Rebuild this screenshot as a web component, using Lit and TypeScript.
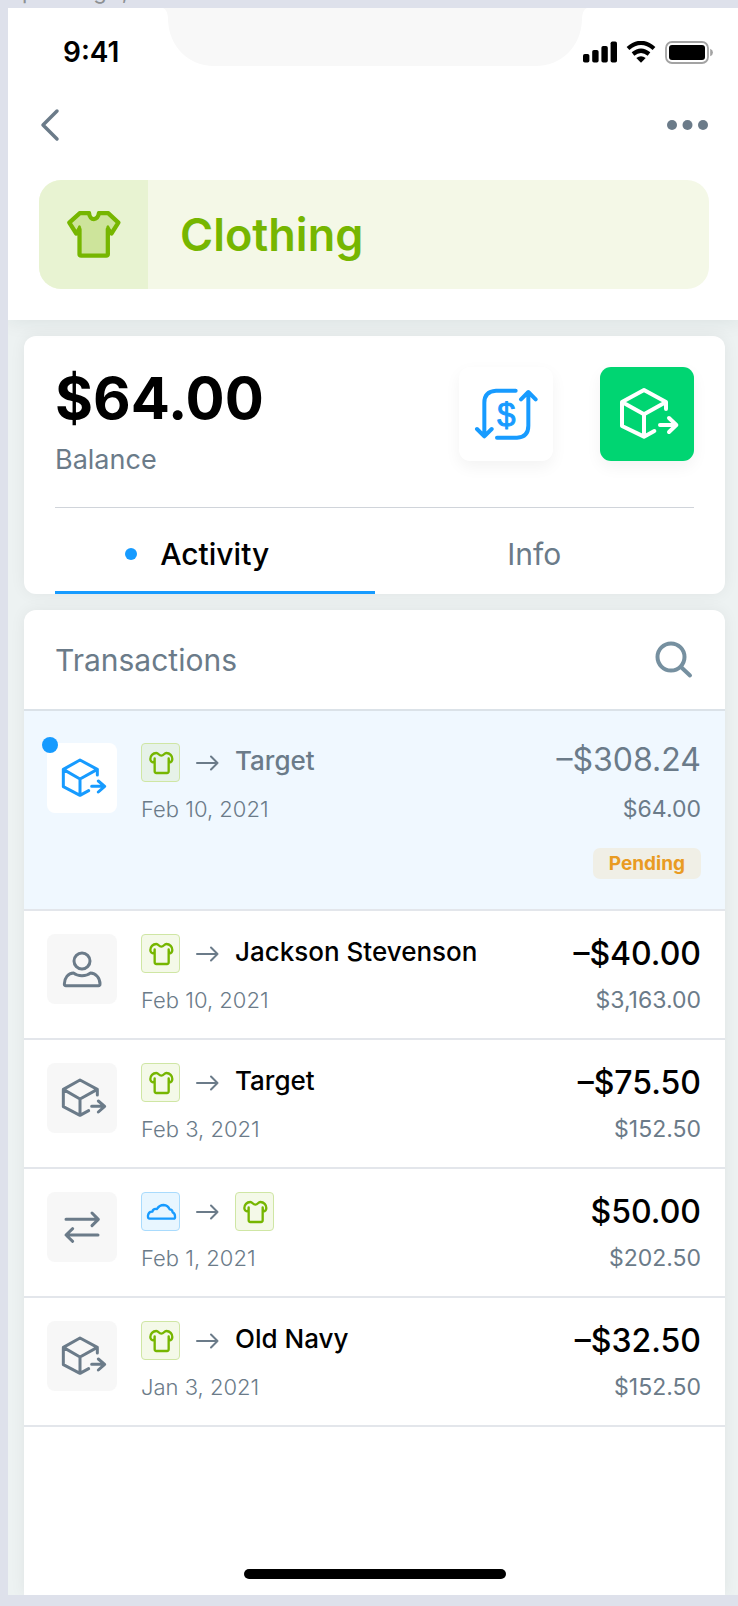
import { LitElement, html, svg, css, nothing, type TemplateResult } from "lit";
import { customElement, property, state } from "lit/decorators.js";
import { classMap } from "lit/directives/class-map.js";

type Kind = "spend" | "person" | "transfer";
type Pocket = "clothing" | "travel";

interface Transaction {
  kind: Kind;
  from: Pocket;
  to: string | { pocket: Pocket };
  date: string;
  amount: string;
  balance: string;
  pending?: boolean;
}

const TRANSACTIONS: Transaction[] = [
  { kind: "spend", from: "clothing", to: "Target", date: "Feb 10, 2021", amount: "–$308.24", balance: "$64.00", pending: true },
  { kind: "person", from: "clothing", to: "Jackson Stevenson", date: "Feb 10, 2021", amount: "–$40.00", balance: "$3,163.00" },
  { kind: "spend", from: "clothing", to: "Target", date: "Feb 3, 2021", amount: "–$75.50", balance: "$152.50" },
  { kind: "transfer", from: "travel", to: { pocket: "clothing" }, date: "Feb 1, 2021", amount: "$50.00", balance: "$202.50" },
  { kind: "spend", from: "clothing", to: "Old Navy", date: "Jan 3, 2021", amount: "–$32.50", balance: "$152.50" },
];

const KIND_PATHS: Record<Kind, TemplateResult> = {
  spend: svg`<path d="M151 96V79L99 51L49 79V131L99 157L125 143M49 79L99 108L151 79M99 108V157M134 130H172M154 114L173 130L154 147"/>`,
  person: svg`<circle cx="105" cy="81" r="24"/><path d="M52 150Q52 155 57 155H154Q159 155 159 150C159 132 147 118 130 117C118 128 92 128 80 117C63 118 52 132 52 150Z"/>`,
  transfer: svg`<path d="M57 82H153M135 63L154 82L135 101M153 129H58M77 110L57 129L77 148"/>`,
};

const POCKET_PATHS: Record<Pocket, TemplateResult> = {
  clothing: svg`<path d="M43 27C50 27 50 35 58 35C66 35 66 27 73 27C84 27 91 36 91 45C91 51 86 55 81 56L80 43V82Q80 87 75 87H43Q38 87 38 82V43L37 56C30 55 25 51 25 45C25 36 32 27 43 27Z"/>`,
  travel: svg`<path d="M22 77Q17 76 18 67Q20 55 31 56Q33 46 45 48Q52 36 65 36Q78 37 83 49Q91 49 92 58Q99 61 99 70Q100 77 95 77Z"/>`,
};

@customElement("status-bar")
export class StatusBar extends LitElement {
  static styles = css`
    :host { display: flex; align-items: center; justify-content: space-between; height: 88px; padding: 0 28px 0 55px; }
    .time { font-size: 28px; font-weight: 600; line-height: 34px; }
    .icons { display: flex; align-items: center; gap: 9px; }
    svg { display: block; }
  `;
  render() {
    return html`
      <span class="time">9:41</span>
      <span class="icons" role="img" aria-label="Full signal, Wi-Fi, battery full">
        <svg width="34" height="22" viewBox="0 0 34 22">
          <rect x="0" y="13" width="6.400" height="8.500" rx="1.800"/><rect x="9.200" y="9" width="6.400" height="12.500" rx="1.800"/>
          <rect x="18.400" y="5" width="6.400" height="16.500" rx="1.800"/><rect x="27.600" y="0.500" width="6.400" height="21" rx="1.800"/>
        </svg>
        <svg width="30" height="22" viewBox="0 0 30 22">
          <path d="M2 7.500Q15-3.700 28 7.500M7 13Q15 6.500 23 13" fill="none" stroke="#000" stroke-width="4.200"/>
          <path d="M10.300 17Q15 13.300 19.700 17L15 21.700Z"/>
        </svg>
        <svg width="48" height="23" viewBox="0 0 48 23">
          <rect x="1" y="1" width="42" height="21" rx="6" fill="none" stroke="#a3a3a3" stroke-width="1.800"/>
          <rect x="4" y="4" width="36" height="15" rx="3"/>
          <path d="M45.200 7.800Q48 9 48 11.500Q48 14 45.200 15.200Z" fill="#a3a3a3"/>
        </svg>
      </span>`;
  }
}

@customElement("pocket-badge")
export class PocketBadge extends LitElement {
  @property() pocket: Pocket = "clothing";
  static styles = css`
    :host { display: block; }
    .badge { box-sizing: border-box; display: grid; place-items: center; width: 39px; height: 39px; border: 1px solid; border-radius: 4px; }
    .clothing { color: #76b600; background: rgba(147, 200, 25, 0.1); border-color: #cfe6a4; }
    .travel { color: #179bff; background: #e8f6ff; border-color: #a9dbfd; }
    svg { display: block; fill: none; stroke: currentColor; stroke-width: 7; stroke-linejoin: round; }
  `;
  render() {
    return html`<span class="badge ${this.pocket}">
      <svg width="39" height="39" viewBox="0 0 117 117" role="img" aria-label=${this.pocket}>${POCKET_PATHS[this.pocket]}</svg>
    </span>`;
  }
}

@customElement("transaction-row")
export class TransactionRow extends LitElement {
  @property({ attribute: false }) item!: Transaction;
  static styles = css`
    :host { display: block; }
    .row { display: grid; grid-template-columns: 70px minmax(0, 1fr) auto; column-gap: 24px; padding: 23px 24px 23px 23px; border-bottom: 2px solid #e3e6eb; }
    .row.pending { padding-top: 32px; padding-bottom: 30px; background: #f0f8ff; }
    .tile { position: relative; width: 70px; height: 70px; border-radius: 8px; background: #f7f7f7; color: #6b7b89; }
    .pending .tile { background: #fff; color: #179bff; }
    .tile svg { display: block; fill: none; stroke: currentColor; stroke-width: 9; stroke-linecap: round; stroke-linejoin: round; }
    .unread { position: absolute; top: -6px; left: -5px; width: 16px; height: 16px; border-radius: 50%; background: #179bff; }
    .route { display: flex; align-items: center; gap: 16px; height: 39px; }
    .arrow { display: block; width: 23px; fill: none; stroke: #6b7b89; stroke-width: 2; stroke-linecap: round; stroke-linejoin: round; }
    .name { font-size: 26px; font-weight: 500; line-height: 34px; padding-bottom: 4px; color: #000; white-space: nowrap; }
    .date { margin-top: 12px; font-size: 22px; font-weight: 300; line-height: 30px; color: #6b7b89; }
    .figures { display: flex; flex-direction: column; align-items: flex-end; }
    .amount { font-size: 32px; font-weight: 500; line-height: 39px; color: #000; }
    .balance { margin-top: 12px; font-size: 23px; line-height: 30px; color: #6b7b89; }
    .pending .name, .pending .amount { color: #6b7b89; }
    .pending .amount { padding-bottom: 6px; font-weight: 400; line-height: 33px; }
    .tag { margin-top: 24px; padding: 0 16px; border-radius: 7px; background: #f0efe6; color: #e99b22; font-size: 19px; font-weight: 700; line-height: 31px; }
  `;
  render() {
    const t = this.item;
    return html`<div class=${classMap({ row: true, pending: !!t.pending })}>
      <div class="tile">
        <svg width="70" height="70" viewBox="0 0 210 210" aria-hidden="true">${KIND_PATHS[t.kind]}</svg>
        ${t.pending ? html`<span class="unread"></span>` : nothing}
      </div>
      <div>
        <div class="route">
          <pocket-badge .pocket=${t.from}></pocket-badge>
          <svg class="arrow" width="23" height="16" viewBox="0 0 23 16" aria-hidden="true"><path d="M1 8H21.500M15 1.500L21.500 8L15 14.500"/></svg>
          ${typeof t.to === "string"
            ? html`<span class="name">${t.to}</span>`
            : html`<pocket-badge .pocket=${t.to.pocket}></pocket-badge>`}
        </div>
        <div class="date">${t.date}</div>
      </div>
      <div class="figures">
        <span class="amount">${t.amount}</span>
        <span class="balance">${t.balance}</span>
        ${t.pending ? html`<span class="tag">Pending</span>` : nothing}
      </div>
    </div>`;
  }
}

@customElement("app-root")
export class AppRoot extends LitElement {
  @state() private tab: "Activity" | "Info" = "Activity";

  static styles = css`
    :host {
      box-sizing: border-box; display: flex; flex-direction: column; min-height: 100vh; padding: 0 0 11px 8px; overflow: hidden;
      background: #dee1eb; color: #000; font-family: Inter, "Liberation Sans", sans-serif;
    }
    button { display: block; margin: 0; padding: 0; border: 0; background: none; color: inherit; font: inherit; cursor: pointer; }
    svg { display: block; }
    h1, h2, p, ul { margin: 0; padding: 0; font-weight: inherit; list-style: none; }
    .caption { display: flex; align-items: flex-end; height: 8px; overflow: hidden; font-size: 22px; line-height: 34px; color: #8d9093; }
    .screen { position: relative; flex: 1; display: flex; flex-direction: column; gap: 16px; width: calc(100% + 3px); background: #edf2f2; overflow: hidden; }
    .notch { position: absolute; top: 0; left: 50%; transform: translateX(-50%); }
    .header { position: relative; padding-bottom: 31px; background: #fff; box-shadow: 0 0 20px rgba(20, 40, 40, 0.09); }
    .nav { display: flex; align-items: center; justify-content: space-between; height: 58px; margin-bottom: 26px; padding: 0 32px; color: #6b7b89; }
    .banner { display: flex; margin: 0 32px 0 31px; border-radius: 22px; overflow: hidden; background: #f4f8e7; color: #76b600; }
    .banner-icon { display: grid; place-items: center; width: 109px; height: 109px; background: #e8f3d2; }
    .banner h1 { padding-left: 32px; font-size: 45px; font-weight: 600; line-height: 109px; }
    .card { margin: 0 16px; border-radius: 12px; background: #fff; box-shadow: 0 0 16px rgba(20, 40, 40, 0.06); }
    .summary { padding: 31px 31px 0; }
    .totals { display: flex; align-items: flex-start; gap: 47px; padding-bottom: 33px; border-bottom: 1px solid #d0d4da; }
    .balance { flex: 1; }
    .balance p { font-size: 58px; font-weight: 700; line-height: 62px; }
    .balance h2 { margin-top: 16px; font-size: 27px; line-height: 29px; color: #6b7b89; }
    .action { border-radius: 11px; background: #fff; color: #179bff; box-shadow: 0 6px 16px rgba(0, 0, 0, 0.05); }
    .action.primary { background: #00d572; color: #fff; }
    .action svg { fill: none; stroke: currentColor; stroke-width: 12; stroke-linecap: round; stroke-linejoin: round; }
    .action text { fill: currentColor; stroke-width: 3; font-family: "Liberation Sans", sans-serif; font-size: 98px; text-anchor: middle; }
    .tabs { display: grid; grid-template-columns: 1fr 1fr; }
    .tab { display: grid; grid-template-columns: 1fr auto 1fr; align-items: center; column-gap: 23px; height: 86px; padding-top: 11px; padding-bottom: 3px; border-bottom: 3px solid transparent; box-sizing: border-box; font-size: 30px; color: #6b7b89; }
    .tab span { grid-column: 2; grid-row: 1; }
    .tab.active { border-bottom-color: #179bff; color: #000; font-weight: 500; }
    .tab.active::before { content: ""; grid-column: 1; grid-row: 1; justify-self: end; width: 12px; height: 12px; border-radius: 50%; background: #179bff; }
    .list { flex: 1; border-radius: 12px 12px 0 0; }
    .list-head { display: flex; align-items: center; justify-content: space-between; height: 99px; padding: 0 31px; border-bottom: 2px solid #dbe2e8; }
    .list-head h2 { font-size: 30px; color: #6b7b89; }
    .search { color: #7690a0; }
    .home { position: absolute; bottom: 16px; left: 50%; width: 262px; height: 10px; border-radius: 5px; background: #000; transform: translateX(-50%); }
  `;

  private renderTab(name: "Activity" | "Info") {
    const active = this.tab === name;
    return html`<button class=${classMap({ tab: true, active })} role="tab" aria-selected=${active} @click=${() => (this.tab = name)}><span>${name}</span></button>`;
  }

  render() {
    return html`
      <div class="caption">Spending 1,</div>
      <main class="screen">
        <header class="header">
          <svg class="notch" width="424" height="58" viewBox="0 0 424 58" aria-hidden="true">
            <path d="M0 0Q5 2 5 12C6 38 25 58 51 58H373C399 58 418 38 419 12Q419 2 424 0Z" fill="#f8f8f8"/>
          </svg>
          <status-bar></status-bar>
          <nav class="nav">
            <button aria-label="Back">
              <svg width="20" height="34" viewBox="0 0 20 34" fill="none" stroke="currentColor" stroke-width="3.500" stroke-linecap="round" stroke-linejoin="round"><path d="M17 3L3 17L17 31"/></svg>
            </button>
            <button aria-label="More options">
              <svg width="42" height="34" viewBox="0 0 42 34" fill="currentColor"><circle cx="5" cy="17" r="5"/><circle cx="20.500" cy="17" r="5"/><circle cx="36" cy="17" r="5"/></svg>
            </button>
          </nav>
          <div class="banner">
            <span class="banner-icon">
              <svg width="54" height="48" viewBox="200 150 164 145" fill="#cde49b" stroke="#76b600" stroke-width="13" stroke-linejoin="round" aria-hidden="true">
                <path d="M239 156H267C269 180 294 180 297 156H325L356 185L335 218L324 205V280Q324 285 319 285H243Q238 285 238 280V205L228 218L207 185Z"/>
                <path d="M238 197V218L229 217ZM324 197V218L334 217Z" stroke-width="8" fill="#76b600"/>
              </svg>
            </span>
            <h1>Clothing</h1>
          </div>
        </header>

        <section class="card summary">
          <div class="totals">
            <div class="balance">
              <p>$64.00</p>
              <h2>Balance</h2>
            </div>
            <button class="action" aria-label="Transfer money">
              <svg width="94" height="94" viewBox="0 0 282 282">
                <path d="M170 71H111Q76 73 76 107V208M54 186L76 208L98 186M114 212H174Q208 210 208 176V76M186 97L208 75L230 97"/>
                <text x="142" y="176">$</text>
              </svg>
            </button>
            <button class="action primary" aria-label="Spend from pocket">
              <svg width="94" height="94" viewBox="0 0 282 282">
                <path d="M198 126V105L132 69L66 105V177L132 209L163 192M66 105L132 142L198 105M132 142V209M180 174H228M207 153L229 174L207 195"/>
              </svg>
            </button>
          </div>
          <div class="tabs" role="tablist">${this.renderTab("Activity")}${this.renderTab("Info")}</div>
        </section>

        <section class="card list">
          <div class="list-head">
            <h2>Transactions</h2>
            <button class="search" aria-label="Search transactions">
              <svg width="40" height="40" viewBox="0 0 40 40" fill="none" stroke="currentColor" stroke-width="4" stroke-linecap="round"><circle cx="17" cy="17" r="13.500"/><path d="M27 27L36 35.500"/></svg>
            </button>
          </div>
          <ul>${TRANSACTIONS.map((t) => html`<li><transaction-row .item=${t}></transaction-row></li>`)}</ul>
        </section>
        <div class="home"></div>
      </main>`;
  }
}
